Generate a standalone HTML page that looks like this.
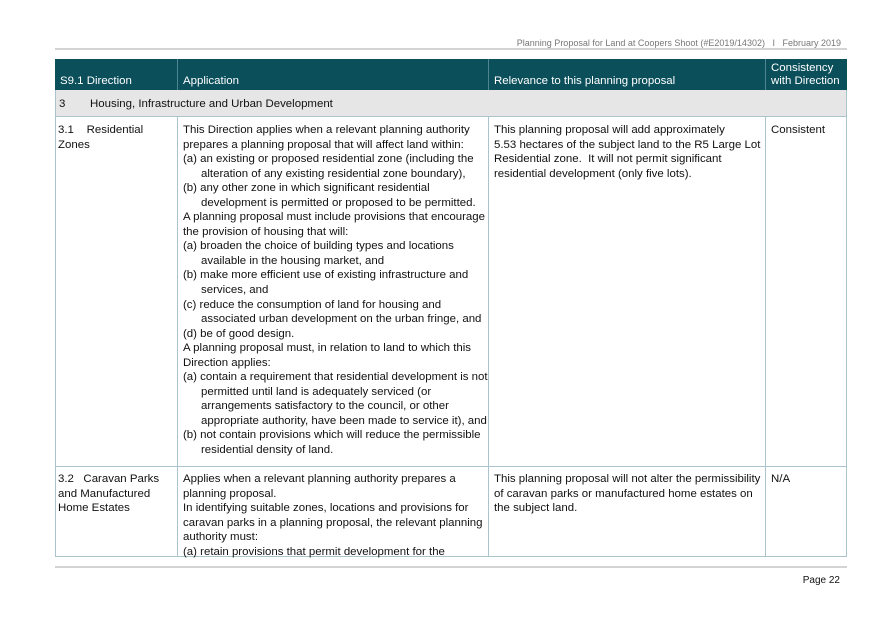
<!DOCTYPE html>
<html><head><meta charset="utf-8"><style>
*{margin:0;padding:0;box-sizing:border-box}
body{width:875px;height:619px;background:#fff;position:relative;font-family:"Liberation Sans",Arial,sans-serif;color:#111;overflow:hidden}
.hdr{position:absolute;right:34px;top:38px;font-size:9px;color:#777;white-space:nowrap}
.rule{position:absolute;left:55px;width:792px;height:2px;background:#d4d4d4}
.c{position:absolute;font-size:11.45px;line-height:14.55px;white-space:nowrap}
.th{position:absolute;top:59px;height:31px;background:#0b4f5b;color:#fff;font-size:11.45px;line-height:13px;white-space:nowrap}
.th span{position:absolute;left:5px;bottom:2px}
.b{position:absolute;background:#a9c4cc}
.h{padding-left:18px;text-indent:-18px}
</style></head><body>
<div class="hdr">Planning Proposal for Land at Coopers Shoot (#E2019/14302) &nbsp; I &nbsp; February 2019</div>
<div class="rule" style="top:48px"></div>

<div class="th" style="left:55px;width:792px"></div>
<div class="th" style="left:55px;width:122px"><span>S9.1 Direction</span></div>
<div class="th" style="left:177px;width:311px;border-left:1px solid #4f8590"><span>Application</span></div>
<div class="th" style="left:488px;width:277px;border-left:1px solid #4f8590"><span>Relevance to this planning proposal</span></div>
<div class="th" style="left:765px;width:82px;border-left:1px solid #4f8590"><span>Consistency<br>with Direction</span></div>

<div style="position:absolute;left:55px;top:90px;width:792px;height:26px;background:#e6e6e6"></div>
<div class="c" style="left:59px;top:97px">3</div>
<div class="c" style="left:90px;top:97px">Housing, Infrastructure and Urban Development</div>

<div class="b" style="left:55px;top:90px;width:1px;height:467px"></div>
<div class="b" style="left:846px;top:90px;width:1px;height:467px"></div>
<div class="b" style="left:55px;top:116px;width:792px;height:1px"></div>
<div class="b" style="left:55px;top:466px;width:792px;height:1px"></div>
<div class="b" style="left:55px;top:556px;width:792px;height:1px"></div>
<div class="b" style="left:177px;top:116px;width:1px;height:441px"></div>
<div class="b" style="left:488px;top:116px;width:1px;height:441px"></div>
<div class="b" style="left:765px;top:116px;width:1px;height:441px"></div>

<div class="c" style="left:58px;top:123px">3.1&nbsp;&nbsp;&nbsp;&nbsp;Residential<br>Zones</div>
<div class="c" style="left:183px;top:123px">
This Direction applies when a relevant planning authority<br>prepares a planning proposal that will affect land within:
<div class="h">(a) an existing or proposed residential zone (including the<br>alteration of any existing residential zone boundary),</div>
<div class="h">(b) any other zone in which significant residential<br>development is permitted or proposed to be permitted.</div>
A planning proposal must include provisions that encourage<br>the provision of housing that will:
<div class="h">(a) broaden the choice of building types and locations<br>available in the housing market, and</div>
<div class="h">(b) make more efficient use of existing infrastructure and<br>services, and</div>
<div class="h">(c) reduce the consumption of land for housing and<br>associated urban development on the urban fringe, and</div>
<div class="h">(d) be of good design.</div>
A planning proposal must, in relation to land to which this<br>Direction applies:
<div class="h">(a) contain a requirement that residential development is not<br>permitted until land is adequately serviced (or<br>arrangements satisfactory to the council, or other<br>appropriate authority, have been made to service it), and</div>
<div class="h">(b) not contain provisions which will reduce the permissible<br>residential density of land.</div>
</div>
<div class="c" style="left:494px;top:123px">This planning proposal will add approximately<br>5.53 hectares of the subject land to the R5 Large Lot<br>Residential zone.&nbsp; It will not permit significant<br>residential development (only five lots).</div>
<div class="c" style="left:771px;top:123px">Consistent</div>

<div class="c" style="left:58px;top:472px">3.2&nbsp;&nbsp;&nbsp;Caravan Parks<br>and Manufactured<br>Home Estates</div>
<div class="c" style="left:183px;top:472px">Applies when a relevant planning authority prepares a<br>planning proposal.<br>In identifying suitable zones, locations and provisions for<br>caravan parks in a planning proposal, the relevant planning<br>authority must:<br>(a) retain provisions that permit development for the</div>
<div class="c" style="left:494px;top:472px">This planning proposal will not alter the permissibility<br>of caravan parks or manufactured home estates on<br>the subject land.</div>
<div class="c" style="left:771px;top:472px">N/A</div>

<div class="rule" style="top:566px"></div>
<div class="c" style="right:35px;top:574px;font-size:10px">Page 22</div>
</body></html>
